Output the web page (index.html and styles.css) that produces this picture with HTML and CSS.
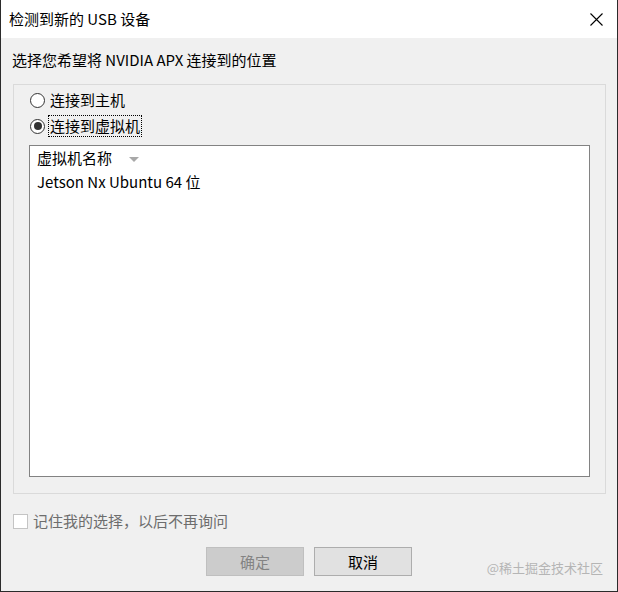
FILE: index.html
```html
<!DOCTYPE html>
<html lang="zh-CN">
<head>
<meta charset="utf-8">
<title>检测到新的 USB 设备</title>
<link rel="stylesheet" href="styles.css">
</head>
<body>
<div class="window">
  <div class="titlebar">
    <span class="title">检测到新的 USB 设备</span>
    <svg class="close" width="13" height="13" viewBox="0 0 13 13"><path d="M0.5 0.5 L12.5 12.5 M12.5 0.5 L0.5 12.5" stroke="#000" stroke-width="1.1" fill="none"/></svg>
  </div>
  <div class="content">
    <div class="prompt">选择您希望将 NVIDIA APX 连接到的位置</div>
    <div class="group">
      <div class="radio-row"><span class="radio"></span><span class="radio-label">连接到主机</span></div>
      <div class="radio-row"><span class="radio checked"></span><span class="radio-label focused">连接到虚拟机</span></div>
      <div class="list">
        <div class="list-header"><span>虚拟机名称</span><span class="sort-arrow"></span></div>
        <div class="list-item">Jetson Nx Ubuntu 64 位</div>
      </div>
    </div>
    <div class="remember"><span class="checkbox"></span><span class="remember-label">记住我的选择，以后不再询问</span></div>
    <div class="buttons">
      <div class="btn disabled">确定</div>
      <div class="btn">取消</div>
    </div>
  </div>
  <div class="watermark">@稀土掘金技术社区</div>
</div>
</body>
</html>
```
FILE: styles.css
```css
html, body {
  margin: 0;
  padding: 0;
  background: #f0f0f0;
}
body {
  font-family: "Noto Sans CJK SC", "Noto Sans", sans-serif;
  font-size: 15px;
  color: #000;
}
.window {
  position: relative;
  width: 618px;
  height: 592px;
  box-sizing: border-box;
  border: 1px solid #2b2b2b;
  border-top: none;
  background: #f0f0f0;
  display: flex;
  flex-direction: column;
}
.titlebar {
  height: 38px;
  flex: none;
  background: #fff;
  display: flex;
  align-items: center;
  justify-content: space-between;
  padding: 0 14px 0 8px;
}
.title {
  font-size: 15px;
  line-height: 20px;
}
.close {
  display: block;
}
.content {
  flex: 1;
  padding: 0 11px;
  display: flex;
  flex-direction: column;
}
.prompt {
  margin-top: 12px;
  line-height: 20px;
  height: 20px;
}
.group {
  margin: 14px 0 0 1px;
  height: 410px;
  box-sizing: border-box;
  border: 1px solid #dadada;
  padding: 2px 15px 16px 15px;
  display: flex;
  flex-direction: column;
}
.radio-row {
  height: 26px;
  display: flex;
  align-items: center;
  padding-left: 1px;
}
.radio {
  width: 15px;
  height: 15px;
  box-sizing: border-box;
  border: 1px solid #333;
  border-radius: 50%;
  background: #fff;
  position: relative;
  flex: none;
}
.radio.checked::after {
  content: "";
  position: absolute;
  left: 2.5px;
  top: 2.5px;
  width: 8px;
  height: 8px;
  border-radius: 50%;
  background: #333;
}
.radio-label {
  margin-left: 5px;
  line-height: 18px;
}
.radio-label.focused {
  outline: 1px dotted #000;
  outline-offset: 1px;
}
.list {
  margin-top: 6px;
  height: 332px;
  box-sizing: border-box;
  border: 1px solid #828282;
  background: #fff;
  padding-left: 7px;
}
.list-header {
  height: 24px;
  display: flex;
  align-items: center;
  line-height: 24px;
}
.sort-arrow {
  margin-left: 17px;
  margin-top: 3px;
  width: 0;
  height: 0;
  border-left: 5px solid transparent;
  border-right: 5px solid transparent;
  border-top: 5px solid #a8a8a8;
}
.list-item {
  height: 24px;
  line-height: 24px;
}
.remember {
  margin-top: 17px;
  height: 20px;
  display: flex;
  align-items: center;
  padding-left: 1px;
}
.checkbox {
  width: 15px;
  height: 15px;
  box-sizing: border-box;
  border: 1px solid #c4c4c4;
  background: #fff;
  flex: none;
}
.remember-label {
  margin-left: 5px;
  color: #6d6d6d;
  line-height: 20px;
}
.buttons {
  margin-top: 16px;
  display: flex;
  justify-content: center;
  gap: 10px;
}
.btn {
  width: 98px;
  height: 29px;
  box-sizing: border-box;
  border: 1px solid #adadad;
  background: #e1e1e1;
  display: flex;
  align-items: center;
  justify-content: center;
  font-size: 15px;
}
.btn.disabled {
  background: #cccccc;
  border-color: #bfbfbf;
  color: #838383;
}
.watermark {
  position: absolute;
  right: 14px;
  top: 558px;
  font-size: 13px;
  line-height: 20px;
  color: #b5b5b5;
}
```
